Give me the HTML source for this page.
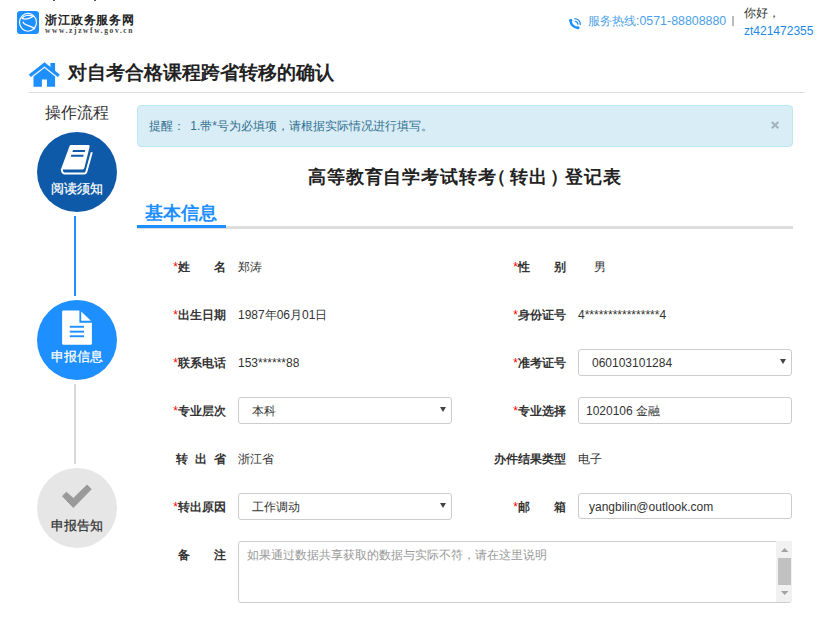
<!DOCTYPE html>
<html><head><meta charset="utf-8">
<style>
*{margin:0;padding:0;box-sizing:border-box}
html,body{width:838px;height:625px;overflow:hidden;background:#fff}
body{position:relative;font-family:"Liberation Sans",sans-serif;color:#333;font-size:12px}
.a{position:absolute;white-space:nowrap}
.lbl{font-weight:bold;color:#333;font-size:12px;line-height:20px;text-align:right}
.val{font-size:12px;line-height:20px;color:#333}
.req{color:#f00;font-weight:normal}
.box{position:absolute;border:1px solid #ccc;border-radius:3px;background:#fff;height:27px;width:214px}
.box span{position:absolute;top:1px;line-height:25px;font-size:12px;color:#333}
.arr{position:absolute;width:0;height:0;border-left:3px solid transparent;border-right:3px solid transparent;border-top:5px solid #444}
.circle{position:absolute;left:37px;width:80px;height:80px;border-radius:50%}
.ctext{position:absolute;left:0;width:80px;text-align:center;font-size:13px;line-height:16px;-webkit-text-stroke:0.25px currentColor}
</style></head><body>

<!-- header -->
<div class="a" style="left:53px;top:0;width:2px;height:1px;background:#554"></div><div class="a" style="left:94px;top:0;width:2px;height:1px;background:#554"></div>
<div class="a" style="left:17px;top:11px;width:22px;height:23px;background:#1e8fff;border-radius:3px"></div>
<div class="a" style="left:45px;top:12px;font-size:12px;letter-spacing:0.85px;line-height:16px;font-weight:bold;color:#222;font-family:'Liberation Serif',serif">浙江政务服务网</div>
<div class="a" style="left:45px;top:26px;font-size:7.5px;line-height:9px;letter-spacing:1.6px;font-weight:bold;color:#444;font-family:'Liberation Serif',serif">www.zjzwfw.gov.cn</div>

<div class="a" style="left:588px;top:13px;font-size:12.4px;line-height:16px;color:#4b9fe8">服务热线:0571-88808880</div>
<div class="a" style="left:732px;top:16px;width:2px;height:10px;background:#bbb"></div>
<div class="a" style="left:744px;top:5px;font-size:12px;line-height:16px;color:#333">你好，</div>
<div class="a" style="left:744px;top:23px;font-size:12px;line-height:16px;color:#1a8ae6">zt421472355</div>

<!-- title -->
<div class="a" style="left:68px;top:61px;font-size:19px;line-height:24px;font-weight:bold;color:#222">对自考合格课程跨省转移的确认</div>
<div class="a" style="left:29px;top:92px;width:776px;height:1px;background:#ddd"></div>

<!-- sidebar -->
<div class="a" style="left:45px;top:103px;font-size:16px;line-height:20px;color:#333">操作流程</div>
<div class="circle" style="top:132px;background:#0f5aa8"><div class="ctext" style="top:49px;color:#fff">阅读须知</div></div>
<div class="a" style="left:74px;top:216px;width:2px;height:80px;background:#1e8fff"></div>
<div class="circle" style="top:300px;background:#1e8fff"><div class="ctext" style="top:49px;color:#fff">申报信息</div></div>
<div class="a" style="left:74px;top:384px;width:2px;height:80px;background:#d8d8d8"></div>
<div class="circle" style="top:468px;background:#e6e6e6"><div class="ctext" style="top:50px;color:#333">申报告知</div></div>

<!-- alert -->
<div class="a" style="left:137px;top:105px;width:656px;height:42px;background:#d9edf7;border:1px solid #bce8f1;border-radius:4px"></div>
<div class="a" style="left:149px;top:116px;font-size:12px;line-height:20px;color:#31708f">提醒：<span style="margin-left:2px"> </span>1.带*号为必填项，请根据实际情况进行填写。</div>

<!-- form title -->
<div class="a" style="left:308px;top:165px;font-size:18px;line-height:24px;font-weight:bold;color:#222;letter-spacing:0.85px">高等教育自学考试转考</div>
<div class="a" style="left:488px;top:165px;font-size:18px;line-height:24px;font-weight:bold;color:#222">（</div>
<div class="a" style="left:510px;top:165px;font-size:18px;line-height:24px;font-weight:bold;color:#222;letter-spacing:0.75px">转出</div>
<div class="a" style="left:550px;top:165px;font-size:18px;line-height:24px;font-weight:bold;color:#222">）</div>
<div class="a" style="left:565px;top:165px;font-size:18px;line-height:24px;font-weight:bold;color:#222;letter-spacing:0.75px">登记表</div>
<div class="a" style="left:145px;top:201px;font-size:18px;line-height:24px;font-weight:bold;color:#1e8fff">基本信息</div>
<div class="a" style="left:137px;top:226px;width:656px;height:3px;background:#ddd"></div>
<div class="a" style="left:137px;top:225px;width:89px;height:3px;background:#1e8fff"></div>

<!-- rows -->
<div class="a lbl" style="left:165px;top:257px;width:61px"><span class="req">*</span>姓　　名</div>
<div class="a val" style="left:238px;top:257px">郑涛</div>
<div class="a lbl" style="left:505px;top:257px;width:61px"><span class="req">*</span>性　　别</div>
<div class="a val" style="left:594px;top:257px">男</div>

<div class="a lbl" style="left:165px;top:305px;width:61px"><span class="req">*</span>出生日期</div>
<div class="a val" style="left:238px;top:305px">1987年06月01日</div>
<div class="a lbl" style="left:505px;top:305px;width:61px"><span class="req">*</span>身份证号</div>
<div class="a val" style="left:578px;top:305px">4****************4</div>

<div class="a lbl" style="left:165px;top:353px;width:61px"><span class="req">*</span>联系电话</div>
<div class="a val" style="left:238px;top:353px">153******88</div>
<div class="a lbl" style="left:505px;top:353px;width:61px"><span class="req">*</span>准考证号</div>
<div class="box" style="left:578px;top:349px"><span style="left:13px">060103101284</span><div class="arr" style="left:201px;top:9px"></div></div>

<div class="a lbl" style="left:165px;top:401px;width:61px"><span class="req">*</span>专业层次</div>
<div class="box" style="left:238px;top:397px"><span style="left:13px">本科</span><div class="arr" style="left:201px;top:9px"></div></div>
<div class="a lbl" style="left:505px;top:401px;width:61px"><span class="req">*</span>专业选择</div>
<div class="box" style="left:578px;top:397px"><span style="left:7px">1020106 金融</span></div>

<div class="a lbl" style="left:176px;top:449px;text-align:left">转</div><div class="a lbl" style="left:195px;top:449px;text-align:left">出</div><div class="a lbl" style="left:214px;top:449px;text-align:left">省</div>
<div class="a val" style="left:238px;top:449px">浙江省</div>
<div class="a lbl" style="left:465px;top:449px;width:101px">办件结果类型</div>
<div class="a val" style="left:578px;top:449px">电子</div>

<div class="a lbl" style="left:165px;top:497px;width:61px"><span class="req">*</span>转出原因</div>
<div class="box" style="left:238px;top:493px"><span style="left:13px">工作调动</span><div class="arr" style="left:201px;top:9px"></div></div>
<div class="a lbl" style="left:505px;top:497px;width:61px"><span class="req">*</span>邮　　箱</div>
<div class="box" style="left:578px;top:493px;height:26px"><span style="left:10px;line-height:24px">yangbilin@outlook.com</span></div>

<div class="a lbl" style="left:165px;top:545px;width:61px">备　　注</div>
<div class="a" style="left:238px;top:541px;width:554px;height:62px;border:1px solid #ccc;border-radius:3px;background:#fff"></div>
<div class="a" style="left:247px;top:545px;font-size:12px;line-height:20px;color:#999">如果通过数据共享获取的数据与实际不符，请在这里说明</div>
<div class="a" style="left:776px;top:541px;width:16px;height:61px;background:#f1f1f1"></div>
<div class="a" style="left:778px;top:558px;width:13px;height:27px;background:#c1c1c1"></div>


<svg class="a" style="left:0;top:0" width="838" height="625" viewBox="0 0 838 625">
<!-- logo -->
<ellipse cx="28" cy="22.3" rx="8.5" ry="8.9" fill="none" stroke="#fff" stroke-width="1.1"/>
<path d="M22.2,18.4 C23.5,15 30,14.6 33.2,16.6 C30,18.5 25,19.6 22.2,18.4 Z" fill="none" stroke="#fff" stroke-width="1.2"/>
<path d="M23.2,22.2 C23.4,25 30,25.4 34.6,28.6" fill="none" stroke="#fff" stroke-width="1.4" stroke-linecap="round"/>
<!-- phone -->
<path d="M570.6,20.6 Q570.8,26.6 577.8,27.9" fill="none" stroke="#1e8fff" stroke-width="2.3" stroke-linecap="round"/>
<circle cx="570.7" cy="20.3" r="1.6" fill="#1e8fff"/>
<circle cx="578" cy="27.7" r="1.5" fill="#1e8fff"/>
<path d="M575,18.6 A6,6 0 0 1 580.4,24.2" fill="none" stroke="#1e8fff" stroke-width="1.4" stroke-linecap="round"/>
<path d="M575.3,21.4 A3.2,3.2 0 0 1 577.9,24.1" fill="none" stroke="#1e8fff" stroke-width="1.4" stroke-linecap="round"/>
<!-- house -->
<polygon points="29.2,74.6 44.5,62.6 59.4,74.6 57.8,76.7 44.5,66.3 30.8,76.7" fill="#1e8fff" stroke="#1e8fff" stroke-width="0.6" stroke-linejoin="round"/>
<rect x="50.4" y="63" width="4.7" height="8" fill="#1e8fff"/>
<polygon points="33.5,76.4 44.5,67.9 55.1,76.4 55.1,86.8 47,86.8 47,79.6 41.9,79.6 41.9,86.8 33.5,86.8" fill="#1e8fff"/>
<!-- book -->
<path d="M70.8,145 L88.6,145 Q90,145 89.6,146.8 L84.4,167.8 Q84,169.6 82.4,169.6 L63,169.6 Q61,169.6 61.6,167.4 L69.4,146.4 Q69.9,145 70.8,145 Z" fill="#fff"/>
<path d="M61.8,168.5 Q61.8,173.4 64.6,173.4 L84.6,173.4 Q85.9,173.4 86.3,172 L91.8,152.2" fill="none" stroke="#fff" stroke-width="2"/>
<polygon points="73,150.1 85.2,150.1 84.8,152.1 72.4,152.1" fill="#0f5aa8"/>
<polygon points="71.3,154.8 83.6,154.8 83.2,156.8 70.7,156.8" fill="#0f5aa8"/>
<!-- doc -->
<path d="M63.3,310.6 L79.4,310.6 L79.4,322.8 L91.9,322.8 L91.9,343.6 Q91.9,344.8 90.7,344.8 L63.3,344.8 Q62.1,344.8 62.1,343.6 L62.1,311.8 Q62.1,310.6 63.3,310.6 Z" fill="#fff"/>
<polygon points="81.2,311.6 81.2,320.8 90.9,320.8" fill="#fff"/>
<rect x="69.8" y="325.8" width="14.2" height="1.9" fill="#1e8fff"/>
<rect x="69.8" y="330.7" width="14.2" height="1.9" fill="#1e8fff"/>
<rect x="69.8" y="335.3" width="14.2" height="1.9" fill="#1e8fff"/>
<!-- check -->
<polygon points="62.5,496.1 66.4,492.3 73.3,498.4 87.1,485 91.2,489.2 73.3,507.5" fill="#9a9a9a" stroke="#9a9a9a" stroke-width="1" stroke-linejoin="round"/>
<!-- close x -->
<path d="M771.8,122 L778.4,128.2 M778.4,122 L771.8,128.2" stroke="#a3b3bb" stroke-width="2"/>
<!-- scrollbar arrows -->
<polygon points="781,552 784.7,548 788.4,552" fill="#a3a3a3"/>
<polygon points="781,591 784.7,595 788.4,591" fill="#a3a3a3"/>
</svg>
</body></html>
